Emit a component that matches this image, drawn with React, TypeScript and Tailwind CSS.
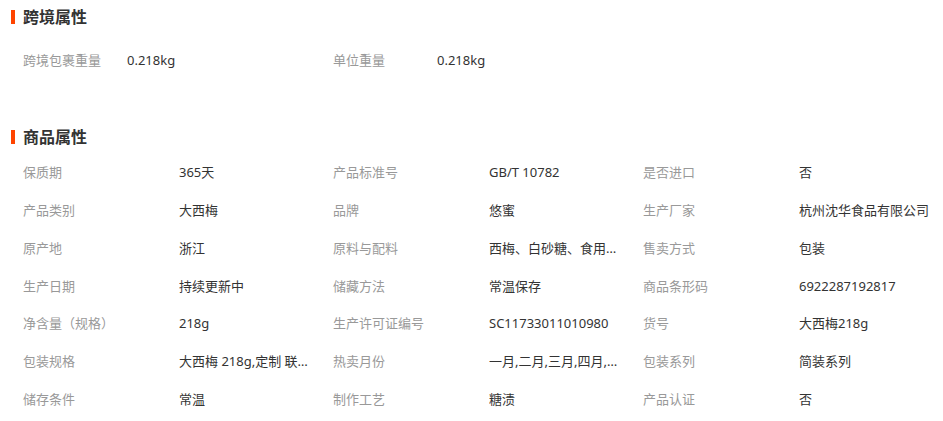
const crossBorder = [
  { label: '跨境包裹重量', value: '0.218kg' },
  { label: '单位重量', value: '0.218kg' },
];

const attrs = [
  ['保质期', '365天', '产品标准号', 'GB/T 10782', '是否进口', '否'],
  ['产品类别', '大西梅', '品牌', '悠蜜', '生产厂家', '杭州沈华食品有限公司'],
  ['原产地', '浙江', '原料与配料', '西梅、白砂糖、食用盐、柠檬酸', '售卖方式', '包装'],
  ['生产日期', '持续更新中', '储藏方法', '常温保存', '商品条形码', '6922287192817'],
  ['净含量（规格）', '218g', '生产许可证编号', 'SC11733011010980', '货号', '大西梅218g'],
  ['包装规格', '大西梅 218g,定制 联系客服', '热卖月份', '一月,二月,三月,四月,五月', '包装系列', '简装系列'],
  ['储存条件', '常温', '制作工艺', '糖渍', '产品认证', '否'],
];

function Title({ text }: { text: string }) {
  return (
    <div className="flex items-center h-5 pl-[11px]">
      <span className="w-[4px] h-[14px] bg-[#ff4400] mr-2" />
      <h2 className="text-[16px] font-bold text-[#333] leading-5">{text}</h2>
    </div>
  );
}

export default function App() {
  return (
    <div
      className="w-[943px] h-[421px] bg-white overflow-hidden pt-[7px] text-[13px]"
      style={{ fontFamily: '"Noto Sans", "Noto Sans CJK SC", sans-serif' }}
    >
      {/* 跨境属性 */}
      <Title text="跨境属性" />
      <div className="flex pl-[23px] mt-[15px] h-[38px] items-center">
        {crossBorder.map((c) => (
          <div key={c.label} className="flex flex-none w-[310px]">
            <span className="w-[104px] flex-none text-[#999]">{c.label}</span>
            <span className="text-[#333]">{c.value}</span>
          </div>
        ))}
      </div>

      {/* 商品属性 */}
      <div className="mt-[47px]">
        <Title text="商品属性" />
      </div>
      <div className="pl-[23px] mt-[7px]">
        {attrs.map((row) => (
          <div key={row[0]} className="flex h-[37.8px] items-center">
            {[0, 2, 4].map((i) => (
              <div key={i} className="flex flex-none w-[310px]">
                <span className="w-[156px] flex-none text-[#999] whitespace-nowrap">{row[i]}</span>
                <span
                  className={
                    i < 4
                      ? 'w-[132px] flex-none text-[#333] whitespace-nowrap overflow-hidden text-ellipsis'
                      : 'flex-none text-[#333] whitespace-nowrap'
                  }
                >
                  {row[i + 1]}
                </span>
              </div>
            ))}
          </div>
        ))}
      </div>
    </div>
  );
}
